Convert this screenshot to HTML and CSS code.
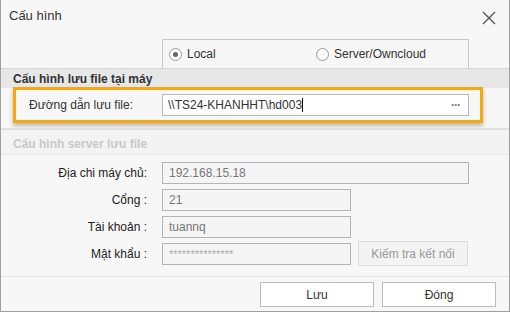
FILE: index.html
```html
<!DOCTYPE html>
<html lang="vi">
<head>
  <meta charset="UTF-8" />
  <title>Cấu hình</title>
  <link rel="stylesheet" href="styles.css">
</head>
<body>
  <div class="window">
    <div class="titlebar">
      <span class="title">Cấu hình</span>
      <svg class="close" width="14" height="14" viewBox="0 0 14 14">
        <path d="M1 1 L13 13 M13 1 L1 13" stroke="#555" stroke-width="1.4" fill="none"/>
      </svg>
    </div>

    <div class="mode-row">
      <div class="mode-box">
        <label class="radio"><span class="dot on"></span>Local</label>
        <label class="radio"><span class="dot"></span>Server/Owncloud</label>
      </div>
    </div>

    <div class="group-head">Cấu hình lưu file tại máy</div>
    <div class="highlight">
      <span class="path-label">Đường dẫn lưu file:</span>
      <div class="field path">
        <span>\\TS24-KHANHHT\hd003<span class="caret"></span></span>
        <span class="dots">···</span>
      </div>
    </div>
    <div class="gap"></div>

    <div class="group-head disabled">Cấu hình server lưu file</div>
    <div class="server">
      <div class="row">
        <span class="label">Địa chi máy chủ:</span>
        <div class="field off wide">192.168.15.18</div>
      </div>
      <div class="row">
        <span class="label">Cổng :</span>
        <div class="field off">21</div>
      </div>
      <div class="row">
        <span class="label">Tài khoản :</span>
        <div class="field off">tuannq</div>
      </div>
      <div class="row">
        <span class="label">Mật khẩu :</span>
        <div class="field off stars">***************</div>
        <button class="btn test">Kiếm tra kết nối</button>
      </div>
    </div>

    <div class="footer">
      <button class="btn action">Lưu</button>
      <button class="btn action">Đóng</button>
    </div>
  </div>
</body>
</html>
```

FILE: styles.css
```css
* { box-sizing: border-box; }

body {
  margin: 0;
  font-family: "Liberation Sans", Arial, sans-serif;
  font-size: 12px;
  color: #333;
  background: #fff;
}

.window {
  width: 510px;
  height: 312px;
  border: 1px solid #a0a0a0;
  border-top: none;
  background: #f7f7f7;
  display: flex;
  flex-direction: column;
}

.titlebar {
  height: 39px;
  display: flex;
  align-items: flex-start;
  justify-content: space-between;
  padding: 8px 13px 0 8px;
}

.title {
  font-size: 13px;
  color: #333;
}

.close { margin-top: 3px; }

.mode-row {
  height: 29px;
  padding-left: 161px;
}

.mode-box {
  width: 307px;
  height: 29px;
  border: 1px solid #c8c8c8;
  border-bottom: none;
  background: #f7f7f7;
  display: flex;
  align-items: center;
  padding-left: 6px;
}

.radio {
  display: flex;
  align-items: center;
  gap: 5px;
  width: 147px;
  font-size: 12px;
  color: #333;
}

.dot {
  width: 13px;
  height: 13px;
  border: 1px solid #9a9a9a;
  border-radius: 50%;
  background: #fff;
  display: flex;
  align-items: center;
  justify-content: center;
}

.dot.on::after {
  content: "";
  width: 5px;
  height: 5px;
  border-radius: 50%;
  background: #666;
}

.group-head {
  height: 20px;
  line-height: 20px;
  padding-left: 12px;
  font-weight: bold;
  font-size: 12px;
  color: #333;
  background: #e7e7e7;
  border-top: 1px solid #d6d6d6;
}

.highlight {
  margin: -1px 26px 0 12px;
  height: 36px;
  border: 3px solid #f6a90e;
  box-shadow: 0 3px 4px rgba(0, 0, 0, 0.25);
  background: #f7f7f7;
  display: flex;
  align-items: center;
  padding-left: 13px;
}

.path-label {
  width: 133px;
  color: #333;
}

.field {
  height: 22px;
  border: 1px solid #b9b9b9;
  background: #fff;
  display: flex;
  align-items: center;
  padding: 0 6px;
  width: 189px;
  color: #333;
}

.field.path,
.field.wide { width: 307px; }

.field.path {
  justify-content: space-between;
  padding: 0 8px 0 5px;
}

.caret {
  display: inline-block;
  width: 1px;
  height: 14px;
  background: #111;
  vertical-align: -3px;
}

.dots {
  color: #777;
  font-weight: bold;
  letter-spacing: -1px;
}

.gap {
  height: 6px;
  border-bottom: 1px solid #e2e2e2;
}

.group-head.disabled {
  height: 26px;
  line-height: 28px;
  color: #c9c9c9;
  background: #f3f3f3;
  border-top: 1px solid #dedede;
  border-bottom: 1px solid #e8e8e8;
}

.server {
  padding: 7px 0 0 0;
  display: flex;
  flex-direction: column;
  gap: 6px;
  height: 122px;
  border-bottom: 1px solid #e4e4e4;
}

.row {
  display: flex;
  align-items: center;
  height: 21px;
}

.label {
  width: 161px;
  padding-right: 15px;
  text-align: right;
  color: #222;
}

.field.off {
  background: #f5f5f5;
  border-color: #b4b4b4;
  color: #777;
}

.field.stars {
  color: #aaa;
  font-size: 11px;
  letter-spacing: 0;
}

.btn {
  font-family: inherit;
  font-size: 12px;
  border: 1px solid #c4c4c4;
  background: #fff;
  color: #333;
  padding: 0;
}

.btn.test {
  margin-left: 7px;
  width: 110px;
  height: 25px;
  background: #f3f3f3;
  border-color: #dcdcdc;
  color: #999;
}

.footer {
  display: flex;
  justify-content: flex-end;
  gap: 8px;
  padding: 5px 13px 0 0;
}

.btn.action {
  width: 114px;
  height: 25px;
  border-color: #bdbdbd;
}
```
